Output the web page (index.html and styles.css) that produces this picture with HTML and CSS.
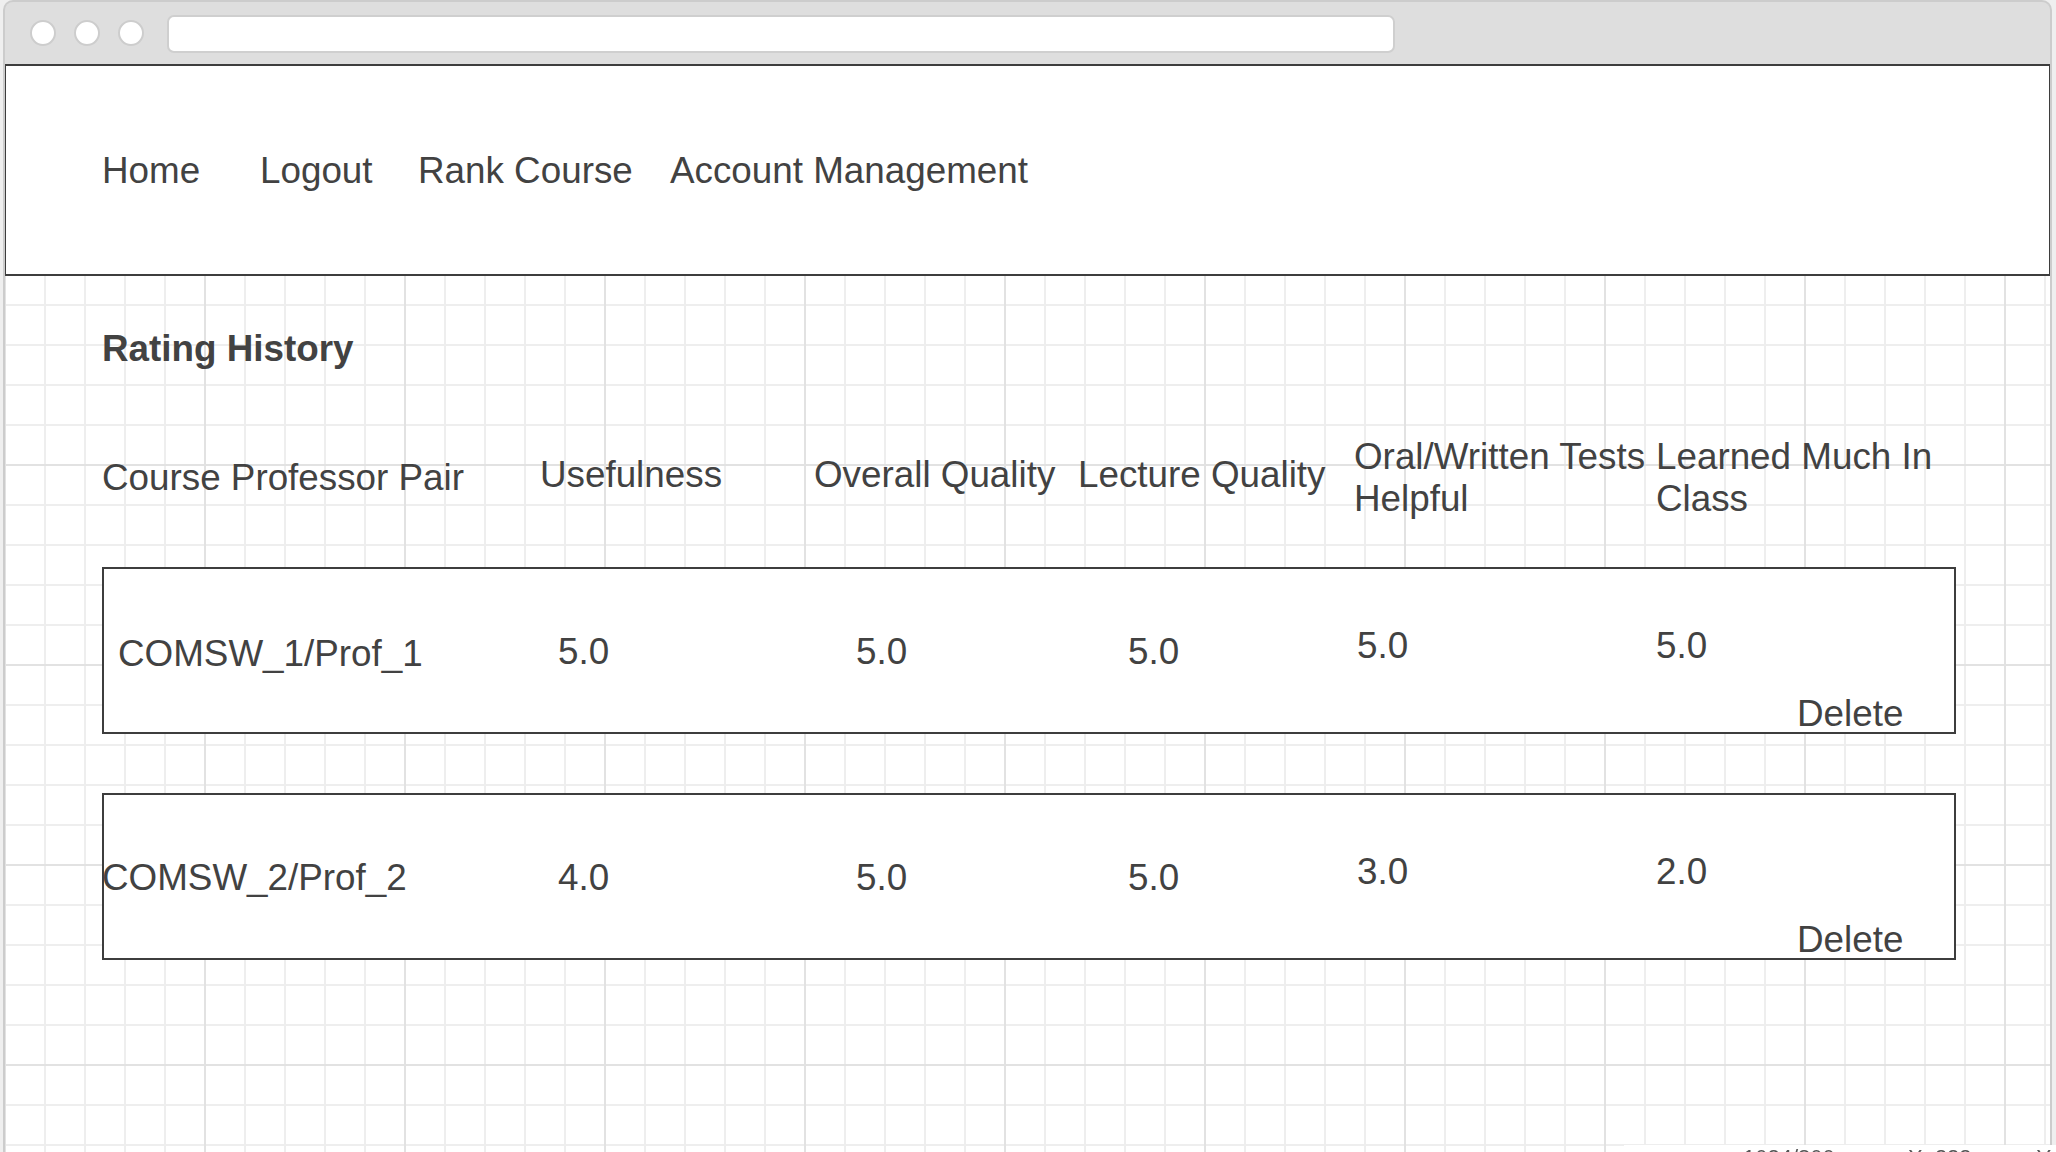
FILE: index.html
```html
<!DOCTYPE html>
<html lang="en">
<head>
<meta charset="utf-8">
<title>Rating History</title>
<link rel="stylesheet" href="styles.css">
</head>
<body>
<div class="window">
  <div class="titlebar">
    <span class="dot"></span>
    <span class="dot"></span>
    <span class="dot"></span>
    <div class="address"></div>
  </div>
  <div class="canvas">
    <header class="nav">
      <a class="nav-item nav-home">Home</a>
      <a class="nav-item nav-logout">Logout</a>
      <a class="nav-item nav-rank">Rank Course</a>
      <a class="nav-item">Account Management</a>
    </header>
    <main class="content">
      <h1 class="title">Rating History</h1>
      <div class="thead">
        <div class="th">Course Professor Pair</div>
        <div class="th th-up">Usefulness</div>
        <div class="th th-up">Overall Quality</div>
        <div class="th th-up">Lecture Quality</div>
        <div class="th">Oral/Written Tests Helpful</div>
        <div class="th">Learned Much In Class</div>
      </div>
      <div class="trow">
        <div class="pair">COMSW_1/Prof_1</div>
        <div class="v">5.0</div>
        <div class="v">5.0</div>
        <div class="v">5.0</div>
        <div class="v v-up">5.0</div>
        <div class="v v-up">5.0</div>
        <div class="del">Delete</div>
      </div>
      <div class="trow trow-next">
        <div class="pair pair-flush">COMSW_2/Prof_2</div>
        <div class="v">4.0</div>
        <div class="v">5.0</div>
        <div class="v">5.0</div>
        <div class="v v-up">3.0</div>
        <div class="v v-up">2.0</div>
        <div class="del">Delete</div>
      </div>
    </main>
  </div>
</div>
<div class="status"><span class="status-size">1024/800</span><span class="status-x">X: 323</span><span>Y:</span></div>
</body>
</html>
```
FILE: styles.css
```css
html, body {
  margin: 0;
  height: 100%;
  overflow: hidden;
  background: #efefef;
}

body {
  font-family: "Liberation Sans", Arial, sans-serif;
  color: #424242;
}

.window {
  margin-left: 3px;
  width: 2049px;
  height: 1170px;
  box-sizing: border-box;
  border: 2px solid #cccccc;
  border-bottom: none;
  border-radius: 10px 10px 0 0;
  background: #dedede;
  display: flex;
  flex-direction: column;
  overflow: hidden;
}

.titlebar {
  height: 62px;
  flex: none;
  display: flex;
  align-items: center;
  padding-left: 25px;
}

.dot {
  width: 26px;
  height: 26px;
  box-sizing: border-box;
  border: 2px solid #cdcdcd;
  border-radius: 50%;
  background: #ffffff;
  margin-right: 18px;
  flex: none;
}

.address {
  margin-left: 5px;
  margin-top: 2px;
  width: 1228px;
  height: 38px;
  box-sizing: border-box;
  border: 2px solid #cfcfcf;
  border-radius: 7px;
  background: #ffffff;
}

.canvas {
  flex: 1;
  background-color: #ffffff;
  background-image:
    linear-gradient(to right, #e2e2e2 2px, transparent 2px),
    linear-gradient(to bottom, #e2e2e2 2px, transparent 2px),
    linear-gradient(to right, #eeeeee 2px, transparent 2px),
    linear-gradient(to bottom, #eeeeee 2px, transparent 2px);
  background-size: 200px 200px, 200px 200px, 40px 40px, 40px 40px;
  background-position: -1px 0, 0 0, -1px 0, 0 0;
  font-size: 36.8px;
  line-height: 41.4px;
}

.nav {
  height: 212px;
  box-sizing: border-box;
  margin: 0 -1px;
  border: 2px solid #3d3d3d;
  background: #ffffff;
  display: flex;
  align-items: center;
  padding-left: 96px;
  padding-top: 2px;
}

.nav-item {
  flex: none;
  color: #424242;
}

.nav-home { width: 158px; }
.nav-logout { width: 158px; }
.nav-rank { width: 252px; }

.content {
  padding-left: 97px;
}

.title {
  margin: 52px 0 0;
  font-size: 36.8px;
  font-weight: bold;
  line-height: 41.4px;
}

.thead {
  margin-top: 67px;
  display: grid;
  grid-template-columns: 438px 274px 264px 276px 302px 300px;
  align-items: center;
}

.th-up {
  margin-top: -6px;
}

.trow {
  margin-top: 48px;
  width: 1854px;
  height: 167px;
  box-sizing: border-box;
  border: 2px solid #3d3d3d;
  background: #ffffff;
  display: grid;
  grid-template-columns: 454px 298px 272px 229px 299px 298px;
  grid-template-rows: 50px auto;
  align-items: start;
  padding-top: 56px;
}

.trow-next {
  margin-top: 59px;
}

.pair {
  margin-top: 8px;
  padding-left: 14px;
  white-space: nowrap;
}

.pair-flush {
  margin-top: 6px;
  margin-left: -2px;
  padding-left: 0;
}

.v {
  margin-top: 6px;
}

.v-up {
  margin-top: 0;
}

.del {
  grid-column: 6;
  grid-row: 2;
  margin-left: 141px;
  margin-top: 18px;
}

.status {
  position: fixed;
  left: 1624px;
  right: 0;
  top: 1145px;
  bottom: 0;
  background: #ffffff;
  font-size: 22px;
  line-height: 22px;
  padding-top: 2px;
  padding-left: 119px;
  white-space: nowrap;
  color: #555555;
  display: flex;
}

.status-size { width: 167px; }
.status-x { width: 130px; }
```
